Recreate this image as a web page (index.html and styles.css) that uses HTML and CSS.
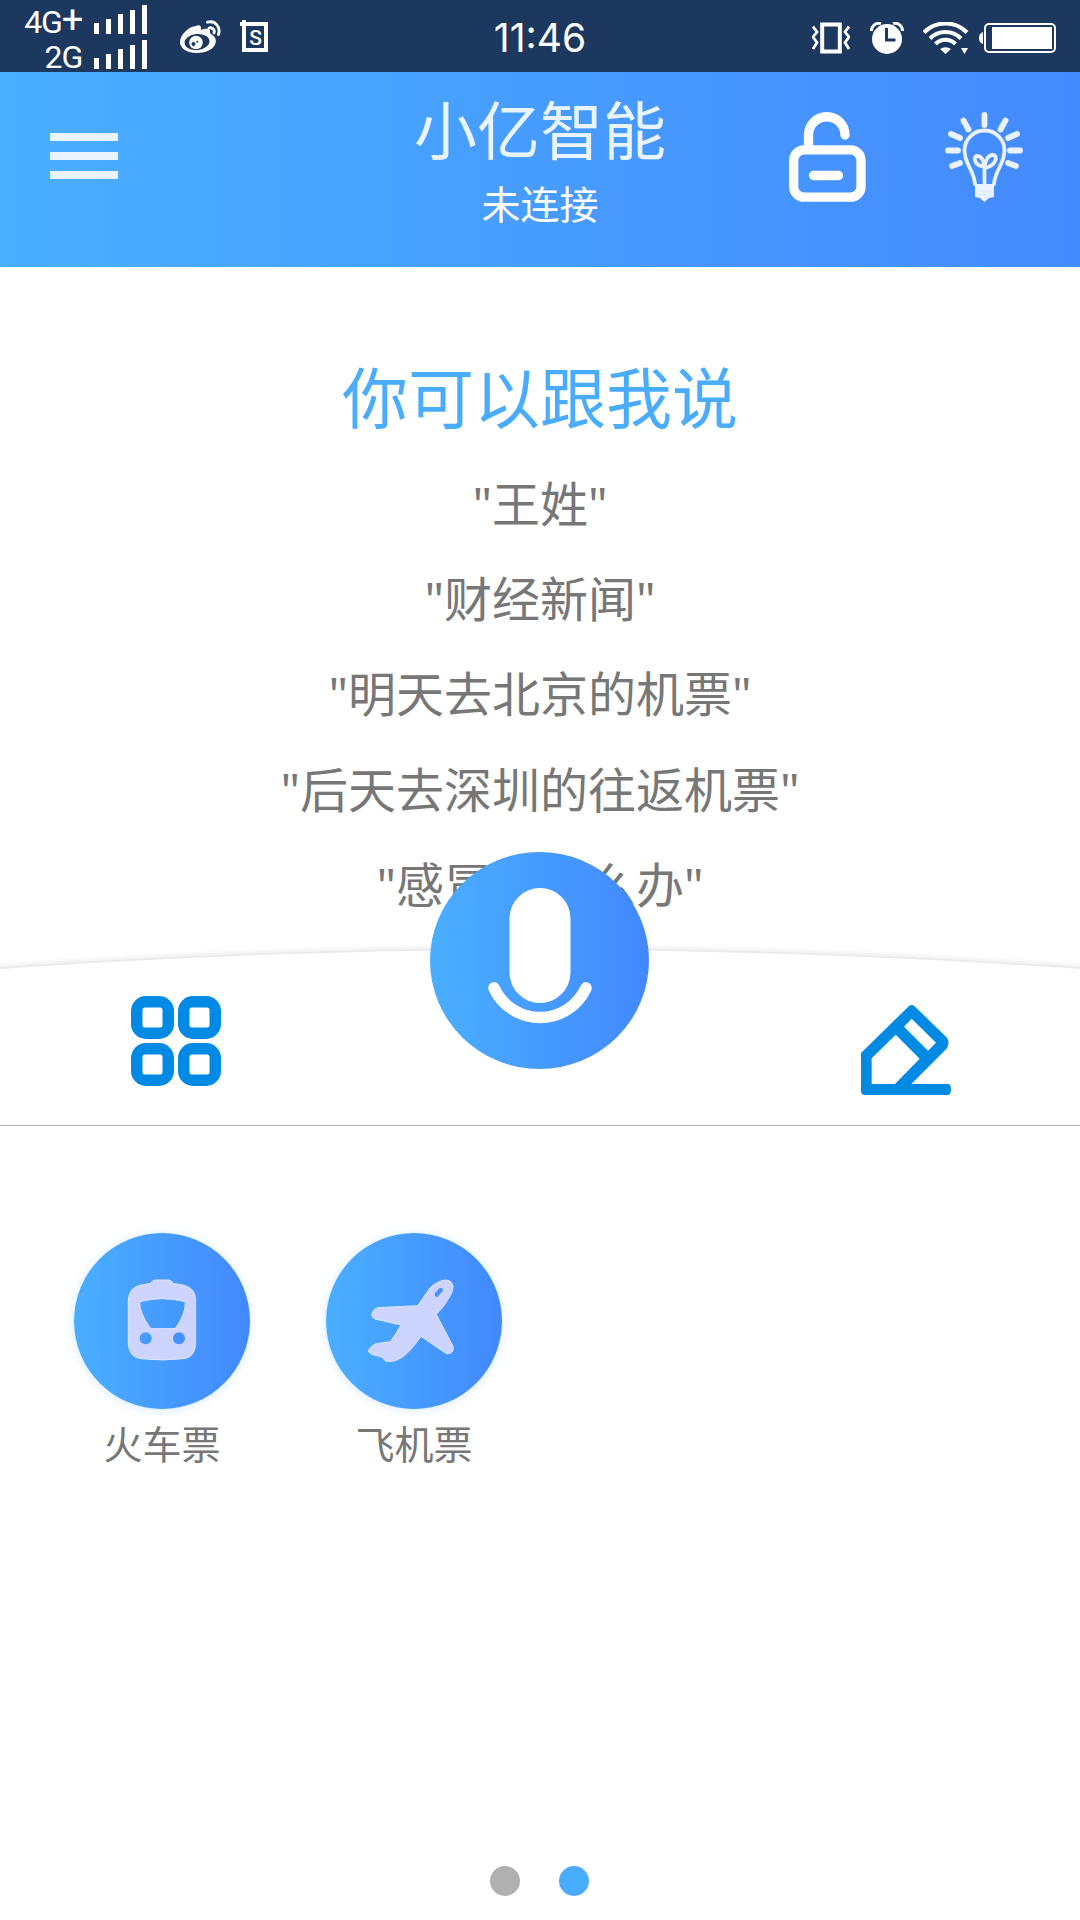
FILE: index.html
```html
<!DOCTYPE html>
<html lang="zh-CN">
<head>
<meta charset="utf-8">
<title>小亿智能</title>
<link rel="stylesheet" href="styles.css">
</head>
<body>
<div class="status">
  <div class="networks">
    <div class="network"><span>4G<span class="plus">+</span></span>
      <svg width="53" height="29" viewBox="0 0 53 29" fill="#fff"><path d="M0 18h5v11H0zM12 14h5v15h-5zM24 9h5v20h-5zM36 5h5v24h-5zM48 0h5v29h-5z"/></svg>
    </div>
    <div class="network"><span>2G</span>
      <svg width="53" height="29" viewBox="0 0 53 29" fill="#fff"><path d="M0 18h5v11H0zM12 14h5v15h-5zM24 9h5v20h-5zM36 5h5v24h-5zM48 0h5v29h-5z"/></svg>
    </div>
  </div>
  <div class="notices">
    <svg width="42" height="34" viewBox="0 0 42 34">
      <path d="M16 6c3-2 6 0 5 4 4-2 10-2 9 2-.4 1.500 1 2 3 3.500C40 21 34 33 17 33 5 33 0 27 0 22 0 15 9 6 16 6z" fill="#fff"/>
      <ellipse cx="17" cy="22" rx="12.500" ry="8" fill="#1c385f" transform="rotate(-6 17 22)"/>
      <circle cx="16" cy="22.500" r="6.800" fill="#fff"/>
      <circle cx="13.500" cy="24" r="2" fill="#1c385f"/><circle cx="17.300" cy="21.800" r="1" fill="#1c385f"/>
      <path d="M27.500 2.200C35 0 41 7 38.500 14.500M29 8c3.500-1 6.200 2 5 5" fill="none" stroke="#fff" stroke-width="2.800" stroke-linecap="round"/>
    </svg>
    <svg width="30" height="32" viewBox="0 0 30 32">
      <path d="M4 4h22v26H4zM0 4h4M4 0v4" fill="none" stroke="#fff" stroke-width="4"/>
      <text class="s-mark" x="15.500" y="24.500" text-anchor="middle">S</text>
    </svg>
  </div>
  <div class="clock">11:46</div>
  <div class="indicators">
    <svg width="38" height="32" viewBox="0 0 38 32" fill="none" stroke="#fff">
      <path d="M10.200 2.500h17.600v27H10.200z" stroke-width="4"/>
      <path d="M1 4.500l4 5.500-4 5 4 5.500L1 27M37 4.500L33 10l4 5-4 5.500 4 6.500" stroke-width="2.800"/>
    </svg>
    <svg width="34" height="32" viewBox="0 0 34 32">
      <circle cx="17" cy="17" r="15" fill="#fff"/>
      <path d="M1.500 9A7.500 7.500 0 0 1 11 1.500M23 1.500A7.500 7.500 0 0 1 32.500 9" fill="none" stroke="#fff" stroke-width="3"/>
      <path d="M16.500 6v12h9" fill="none" stroke="#1c385f" stroke-width="3"/>
    </svg>
    <svg class="wifi" width="46" height="32" viewBox="0 0 46 32">
      <path d="M1 10.500a30 30 0 0 1 43 0M7 16.500a22 22 0 0 1 31 0M12.500 22a14 14 0 0 1 20 0" fill="none" stroke="#fff" stroke-width="4"/>
      <path d="M17 27q5.500-3.500 11 0l-5.500 5zM38 26h7l-3.500 6z" fill="#fff"/>
    </svg>
    <svg class="battery" width="77" height="30" viewBox="0 0 77 30">
      <rect x="6" y="1" width="70" height="28" rx="4" fill="none" stroke="#fff" stroke-width="2"/>
      <path d="M4 9v12C1 20 0 18 0 15s1-5 4-6zM13 4h60v22H13z" fill="#fff"/>
    </svg>
  </div>
</div>

<header class="header">
  <svg class="menu" width="68" height="46" viewBox="0 0 68 46" fill="#e9f4ff"><path d="M0 0h68v8H0zM0 19h68v8H0zM0 38h68v8H0z"/></svg>
  <div class="brand">
    <h1 class="title">小亿智能</h1>
    <div class="state">未连接</div>
  </div>
  <div class="actions">
    <svg width="77" height="90" viewBox="0 0 77 90" fill="none" stroke="#fff" stroke-width="9.300" stroke-linecap="round">
      <rect x="4.700" y="37.800" width="67.300" height="47.400" rx="10.500"/>
      <path d="M19.500 37V23a18.200 18.200 0 0 1 36.500 0M24.500 63.500h25"/>
    </svg>
    <svg width="78" height="90" viewBox="0 0 78 90" fill="none" stroke="#eaf1ff" stroke-width="4" stroke-linecap="round">
      <path d="M30 72C29 58 19.500 52 19.500 38.500a20 20 0 0 1 40 0C59.500 52 50 58 49 72M39.500 72V54C30 55 27 44 32.500 44c4 0 6 5 7 10 1-6 4-11 8-11 6.500 0 3.500 11-8 13" stroke-width="3.800"/>
      <path d="M39.500 3v10M18.500 8.500l5 9M60.500 8.500l-5 9M6 22l9 4M72 22l-9 4M3 38.500h10M65 38.500h10M7 54l8-3M71 54l-8-3" stroke-width="5.800"/>
      <path d="M30 72h19v13l-5 1-4.500 4-4.500-4-5-1z" fill="#eaf1ff" stroke="none"/>
      <path d="M34 79h11M34 83h11" stroke="#d5e4ff" stroke-width=".700"/>
    </svg>
  </div>
</header>

<main class="main">
  <section class="prompts">
    <h2 class="prompts-title">你可以跟我说</h2>
    <ul class="prompt-list">
      <li>"王姓"</li>
      <li>"财经新闻"</li>
      <li>"明天去北京的机票"</li>
      <li>"后天去深圳的往返机票"</li>
      <li>"感冒了怎么办"</li>
    </ul>
  </section>

  <section class="dock">
    <svg class="curve" width="1080" height="40" viewBox="0 0 1080 40" fill="none" stroke-width="2">
      <path d="M0 24Q540-14 1080 24" stroke="#fafafa"/>
      <path d="M0 26Q540-12 1080 26" stroke="#f4f4f4"/>
      <path d="M0 28Q540-10 1080 28" stroke="#ebebeb"/>
    </svg>
    <svg width="90" height="90" viewBox="0 0 90 90">
      <g fill="#008ae4">
        <rect width="43" height="43" rx="15"/><rect x="47" width="43" height="43" rx="15"/>
        <rect y="47" width="43" height="43" rx="15"/><rect x="47" y="47" width="43" height="43" rx="15"/>
      </g>
      <g fill="#fff">
        <rect x="11.500" y="11.500" width="20" height="20" rx="2.500"/><rect x="58.500" y="11.500" width="20" height="20" rx="2.500"/>
        <rect x="11.500" y="58.500" width="20" height="20" rx="2.500"/><rect x="58.500" y="58.500" width="20" height="20" rx="2.500"/>
      </g>
    </svg>
    <svg class="edit" width="90" height="90" viewBox="0 0 270 270" fill="#008ae4" fill-rule="evenodd">
      <path d="M0 144L144 3q8-6 16 0L258 98q9 13 0 32L151 237H262q8 2 8 16t-8 17H10Q0 268 0 258ZM32 160V237H102L176 161L104 89ZM129 65L152 41L225 113L201 137Z"/>
    </svg>
    <button class="mic" aria-label="语音">
      <svg width="104" height="136" viewBox="0 0 104 136">
        <rect x="21.500" y="0" width="61" height="115" rx="30.500" fill="#fff"/>
        <path d="M6 100a50.600 50.600 0 0 0 92 0" fill="none" stroke="#fff" stroke-width="11.500" stroke-linecap="round"/>
      </svg>
    </button>
  </section>

  <section class="services">
    <a class="service">
      <span class="disc">
        <svg width="70" height="84" viewBox="0 0 210 252">
          <path d="M72 13q4-9 12-10h42q8 1 12 10l30 5q36 8 38 42v137q-4 40-38 42-63 8-126 0-34-4-38-42V60q4-36 38-42zM38 68q0 34 30 77 3 4 8 4h62q7 0 10-5 28-40 27-76-68-18-137 0z" fill="#ccd4ff" fill-rule="evenodd" stroke="#dce8ff" stroke-width="3"/>
          <circle cx="56" cy="178" r="18" fill="#459bff"/><circle cx="156" cy="178" r="18" fill="#4590ff"/>
        </svg>
      </span>
      <span class="label">火车票</span>
    </a>
    <a class="service">
      <span class="disc">
        <svg class="plane" width="88" height="84" viewBox="0 0 264 252">
          <path d="M152 80L184 34Q194 18 212 10C236-2 256 2 258 22C258 42 246 54 240 66Q230 84 208 106L258 202Q262 222 244 224Q238 226 232 220L162 172Q126 224 100 238Q74 252 56 246Q50 242 48 236C30 228 6 230 4 214Q14 198 28 194L70 188Q88 164 102 138L24 120Q14 116 14 106Q18 90 32 86Z" fill="#ccd4ff" stroke="#dce8ff" stroke-width="3"/>
          <path d="M204 42l13-14q12-3 10 8l-16 18q-10 0-7-12z" fill="#4590ff"/>
        </svg>
      </span>
      <span class="label">飞机票</span>
    </a>
  </section>
</main>

<nav class="pager"><span class="dot"></span><span class="dot dot-active"></span></nav>
</body>
</html>
```
FILE: styles.css
```css
* {
  box-sizing: border-box;
}

body {
  margin: 0;
  width: 1080px;
  height: 1920px;
  display: flex;
  flex-direction: column;
  overflow: hidden;
  background: #fff;
  font-family: Roboto, "Noto Sans CJK SC", sans-serif;
}

svg {
  display: block;
  flex: none;
}

h1, h2, ul {
  margin: 0;
  padding: 0;
  font-weight: 400;
}

.status {
  height: 72px;
  flex: none;
  display: grid;
  grid-template-columns: 180px 200px 320px 1fr;
  background: #1c385f;
  color: #fff;
}

.networks {
  padding: 5px 0 0 20px;
  display: flex;
  flex-direction: column;
  gap: 6px;
}

.network {
  width: 127px;
  display: flex;
  justify-content: flex-end;
  gap: 12px;
  height: 29px;
  font-size: 32px;
  line-height: 35px;
  letter-spacing: -1.2px;
}

.plus {
  font-size: 38px;
  line-height: 29px;
}

.notices {
  display: flex;
  align-items: flex-start;
  gap: 18px;
  padding-top: 20px;
}

.s-mark {
  font-size: 21px;
  font-weight: 500;
  fill: #fff;
}

.clock {
  text-align: center;
  font-family: Inter, Roboto, sans-serif;
  font-size: 39px;
  line-height: 76px;
}

.indicators {
  display: flex;
  align-items: center;
  gap: 20px;
  padding-left: 112px;
}

.wifi {
  margin-left: -1px;
}

.battery {
  margin-left: -10px;
}

.header {
  height: 195px;
  flex: none;
  display: grid;
  grid-template-columns: 1fr 300px 1fr;
  background: linear-gradient(90deg, #4aafff, #448aff);
}

.menu {
  margin: 61px 0 0 50px;
}

.brand {
  color: #fff;
  text-align: center;
  padding-top: 20px;
}

.title {
  color: #e9f4ff;
  font-size: 63px;
  line-height: 82px;
}

.state {
  font-size: 39px;
  line-height: 64px;
}

.actions {
  display: flex;
  justify-content: flex-end;
  gap: 79px;
  padding: 40px 57px 0 0;
}

.main {
  flex: 1;
}

.prompts {
  height: 673px;
  padding-top: 84px;
  text-align: center;
}

.prompts-title {
  color: #4aacff;
  font-size: 66px;
  line-height: 100px;
}

.prompt-list {
  margin-top: 5px;
  list-style: none;
  color: #777;
  font-family: "Noto Sans", "Noto Sans CJK SC", sans-serif;
  font-size: 48px;
  line-height: 95.200px;
}

.dock {
  position: relative;
  height: 186px;
  display: flex;
  justify-content: space-between;
  padding: 56px 129px 0 131px;
  border-bottom: 1px solid #b5b5b5;
}

.curve {
  position: absolute;
  left: 0;
  top: 0;
}

.edit {
  margin-top: 9px;
}

.mic {
  position: absolute;
  left: 430px;
  top: -88px;
  width: 219px;
  height: 217px;
  padding: 36px 0 0;
  display: flex;
  justify-content: center;
  border: 0;
  border-radius: 50%;
  background: linear-gradient(90deg, #4aafff, #4288ff);
}

.services {
  display: grid;
  grid-template-columns: repeat(4, 252px);
  padding: 107px 36px 0;
}

.service {
  display: flex;
  flex-direction: column;
  align-items: center;
}

.disc {
  width: 176px;
  height: 176px;
  display: flex;
  align-items: center;
  justify-content: center;
  border-radius: 50%;
  background: linear-gradient(90deg, #4aafff, #4288ff);
  box-shadow: 0 1px 10px rgba(74, 172, 255, 0.25);
}

.plane {
  margin-right: 6px;
}

.label {
  margin-top: 7px;
  color: #777;
  font-size: 39px;
  line-height: 60px;
}

.pager {
  height: 54px;
  flex: none;
  display: flex;
  justify-content: center;
  gap: 39px;
  padding-right: 2px;
}

.dot {
  width: 30px;
  height: 30px;
  border-radius: 50%;
  background: #b0b0b0;
}

.dot-active {
  background: #4aacff;
}
```
